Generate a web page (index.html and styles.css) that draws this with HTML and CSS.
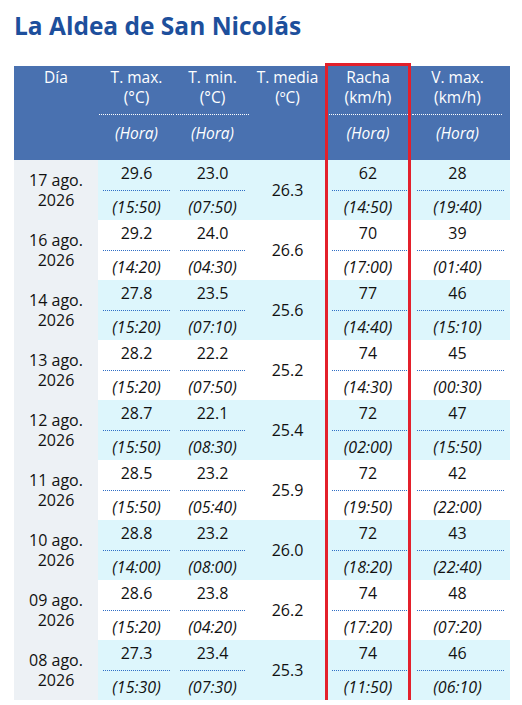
FILE: index.html
```html
<!DOCTYPE html>
<html lang="es">
<head>
<meta charset="utf-8">
<title>La Aldea de San Nicolás</title>
<link rel="stylesheet" href="styles.css">
</head>
<body>
<div class="page">
  <h1 class="title">La Aldea de San Nicolás</h1>
  <div class="wrap">
    <table class="data">
      <colgroup>
        <col class="c-dia"><col class="c-max"><col class="c-min"><col class="c-med"><col class="c-racha"><col class="c-vmax">
      </colgroup>
      <thead>
        <tr>
          <th class="h-dia"><div class="hl">Día</div></th>
          <th><div class="hl">T. max.<br>(°C)</div><div class="hsep"></div><div class="hhora">(Hora)</div></th>
          <th><div class="hl">T. min.<br>(°C)</div><div class="hsep"></div><div class="hhora">(Hora)</div></th>
          <th class="h-med"><div class="hl">T. media<br>(ºC)</div></th>
          <th class="racha"><div class="hl">Racha<br>(km/h)</div><div class="hsep"></div><div class="hhora">(Hora)</div></th>
          <th class="last"><div class="hl">V. max.<br>(km/h)</div><div class="hsep"></div><div class="hhora">(Hora)</div></th>
        </tr>
      </thead>
      <tbody>
        <tr>
          <td class="dia">17 ago.<br>2026</td>
          <td class="m"><div class="v">29.6</div><div class="sep"></div><div class="t">(15:50)</div></td>
          <td class="m"><div class="v">23.0</div><div class="sep"></div><div class="t">(07:50)</div></td>
          <td class="med">26.3</td>
          <td class="m racha"><div class="v">62</div><div class="sep"></div><div class="t">(14:50)</div></td>
          <td class="m last"><div class="v">28</div><div class="sep"></div><div class="t">(19:40)</div></td>
        </tr>
        <tr>
          <td class="dia">16 ago.<br>2026</td>
          <td class="m"><div class="v">29.2</div><div class="sep"></div><div class="t">(14:20)</div></td>
          <td class="m"><div class="v">24.0</div><div class="sep"></div><div class="t">(04:30)</div></td>
          <td class="med">26.6</td>
          <td class="m racha"><div class="v">70</div><div class="sep"></div><div class="t">(17:00)</div></td>
          <td class="m last"><div class="v">39</div><div class="sep"></div><div class="t">(01:40)</div></td>
        </tr>
        <tr>
          <td class="dia">14 ago.<br>2026</td>
          <td class="m"><div class="v">27.8</div><div class="sep"></div><div class="t">(15:20)</div></td>
          <td class="m"><div class="v">23.5</div><div class="sep"></div><div class="t">(07:10)</div></td>
          <td class="med">25.6</td>
          <td class="m racha"><div class="v">77</div><div class="sep"></div><div class="t">(14:40)</div></td>
          <td class="m last"><div class="v">46</div><div class="sep"></div><div class="t">(15:10)</div></td>
        </tr>
        <tr>
          <td class="dia">13 ago.<br>2026</td>
          <td class="m"><div class="v">28.2</div><div class="sep"></div><div class="t">(15:20)</div></td>
          <td class="m"><div class="v">22.2</div><div class="sep"></div><div class="t">(07:50)</div></td>
          <td class="med">25.2</td>
          <td class="m racha"><div class="v">74</div><div class="sep"></div><div class="t">(14:30)</div></td>
          <td class="m last"><div class="v">45</div><div class="sep"></div><div class="t">(00:30)</div></td>
        </tr>
        <tr>
          <td class="dia">12 ago.<br>2026</td>
          <td class="m"><div class="v">28.7</div><div class="sep"></div><div class="t">(15:50)</div></td>
          <td class="m"><div class="v">22.1</div><div class="sep"></div><div class="t">(08:30)</div></td>
          <td class="med">25.4</td>
          <td class="m racha"><div class="v">72</div><div class="sep"></div><div class="t">(02:00)</div></td>
          <td class="m last"><div class="v">47</div><div class="sep"></div><div class="t">(15:50)</div></td>
        </tr>
        <tr>
          <td class="dia">11 ago.<br>2026</td>
          <td class="m"><div class="v">28.5</div><div class="sep"></div><div class="t">(15:50)</div></td>
          <td class="m"><div class="v">23.2</div><div class="sep"></div><div class="t">(05:40)</div></td>
          <td class="med">25.9</td>
          <td class="m racha"><div class="v">72</div><div class="sep"></div><div class="t">(19:50)</div></td>
          <td class="m last"><div class="v">42</div><div class="sep"></div><div class="t">(22:00)</div></td>
        </tr>
        <tr>
          <td class="dia">10 ago.<br>2026</td>
          <td class="m"><div class="v">28.8</div><div class="sep"></div><div class="t">(14:00)</div></td>
          <td class="m"><div class="v">23.2</div><div class="sep"></div><div class="t">(08:00)</div></td>
          <td class="med">26.0</td>
          <td class="m racha"><div class="v">72</div><div class="sep"></div><div class="t">(18:20)</div></td>
          <td class="m last"><div class="v">43</div><div class="sep"></div><div class="t">(22:40)</div></td>
        </tr>
        <tr>
          <td class="dia">09 ago.<br>2026</td>
          <td class="m"><div class="v">28.6</div><div class="sep"></div><div class="t">(15:20)</div></td>
          <td class="m"><div class="v">23.8</div><div class="sep"></div><div class="t">(04:20)</div></td>
          <td class="med">26.2</td>
          <td class="m racha"><div class="v">74</div><div class="sep"></div><div class="t">(17:20)</div></td>
          <td class="m last"><div class="v">48</div><div class="sep"></div><div class="t">(07:20)</div></td>
        </tr>
        <tr>
          <td class="dia">08 ago.<br>2026</td>
          <td class="m"><div class="v">27.3</div><div class="sep"></div><div class="t">(15:30)</div></td>
          <td class="m"><div class="v">23.4</div><div class="sep"></div><div class="t">(07:30)</div></td>
          <td class="med">25.3</td>
          <td class="m racha"><div class="v">74</div><div class="sep"></div><div class="t">(11:50)</div></td>
          <td class="m last"><div class="v">46</div><div class="sep"></div><div class="t">(06:10)</div></td>
        </tr>
      </tbody>
    </table>
    <div class="highlight"></div>
  </div>
</div>
</body>
</html>
```

FILE: styles.css
```css
html, body {
  margin: 0;
  padding: 0;
  background: #ffffff;
}

.page {
  padding: 0 0 0 14px;
  font-family: "Open Sans", "Noto Sans", sans-serif;
  color: #111111;
}

.title {
  margin: 0;
  padding-top: 10px;
  height: 66px;
  box-sizing: border-box;
  font-size: 24.5px;
  line-height: 32px;
  font-weight: 700;
  color: #1d4f9c;
  letter-spacing: 0;
}

.wrap {
  position: relative;
  width: 496px;
}

.data {
  border-collapse: collapse;
  table-layout: fixed;
  width: 496px;
}

.c-dia { width: 84px; }
.c-max { width: 77px; }
.c-min { width: 75px; }
.c-med { width: 75px; }
.c-racha { width: 86px; }
.c-vmax { width: 99px; }

.data th {
  background: #4971b0;
  color: #ffffff;
  font-weight: 400;
  font-size: 15.5px;
  line-height: 20px;
  padding: 1px 0 0 0;
  height: 94px;
  box-sizing: border-box;
  vertical-align: top;
  text-align: center;
}

.data th.last { padding-right: 6px; }

.hl { line-height: 20px; }

.hsep {
  margin: 7px 1px 0 1px;
  border-top: 1px dotted #ffffff;
}

.data th.last .hsep { margin-right: 2px; }

.hhora {
  margin-top: 8px;
  font-style: italic;
  line-height: 20px;
}

.data td {
  height: 60px;
  box-sizing: border-box;
  padding: 0;
  font-size: 16px;
  line-height: 20px;
  text-align: center;
  vertical-align: middle;
}

.data tbody tr:nth-child(odd) td { background: #ddf6fc; }
.data tbody tr:nth-child(even) td { background: #ffffff; }
.data tbody tr td.dia { background: #edf1f5; }

.data td.m {
  padding: 3px 0 3px 0;
  vertical-align: top;
}

.data td.last { padding-right: 6px; }

.v { line-height: 20px; }

.sep {
  margin: 7px 5px 0 5px;
  border-top: 1px dotted #2f6fc6;
}

.data td.racha .sep { margin: 7px 4px 0 7px; }
.data td.last .sep { margin: 7px 0 0 6px; }

.t {
  margin-top: 6px;
  font-style: italic;
  line-height: 20px;
}

.highlight {
  position: absolute;
  left: 311px;
  top: -3px;
  width: 86px;
  height: 641px;
  box-sizing: border-box;
  border: 3px solid #e3202b;
  pointer-events: none;
}
```
